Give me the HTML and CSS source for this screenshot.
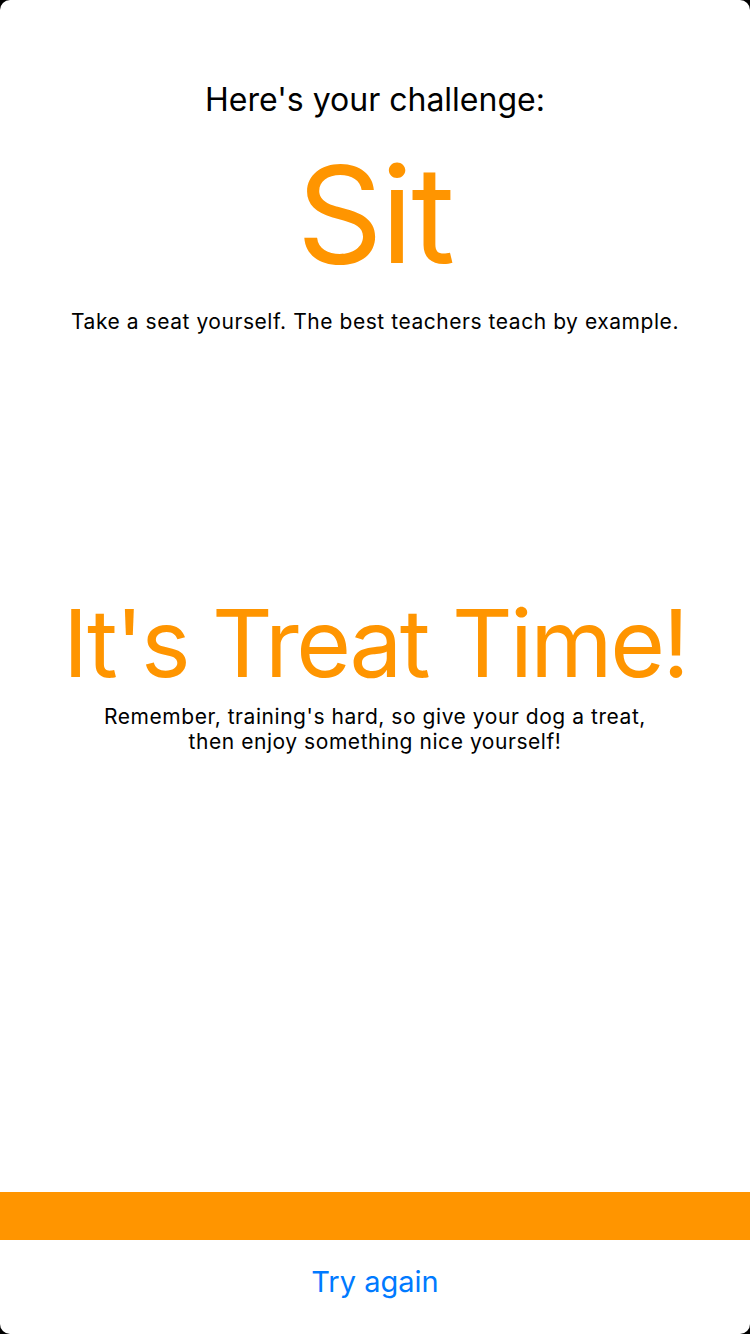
FILE: index.html
```html
<!DOCTYPE html>
<html>
<head>
<meta charset="utf-8">
<link rel="stylesheet" href="styles.css">
</head>
<body>
<div class="screen">
  <main class="content">
    <section class="challenge">
      <h2 class="intro">Here's your challenge:</h2>
      <h1 class="command">Sit</h1>
      <p class="hint">Take a seat yourself. The best teachers teach by example.</p>
    </section>
    <section class="reward">
      <h1 class="treat">It's Treat Time!</h1>
      <p class="note">Remember, training's hard, so give your dog a treat,<br>then enjoy something nice yourself!</p>
    </section>
  </main>
  <div class="bar"></div>
  <footer class="footer">
    <button class="retry">Try again</button>
  </footer>
</div>
</body>
</html>
```
FILE: styles.css
```css
html, body {
  margin: 0;
  padding: 0;
  background: #000;
}
.screen {
  width: 750px;
  height: 1334px;
  background: #fff;
  border-radius: 10px;
  overflow: hidden;
  display: flex;
  flex-direction: column;
  font-family: Inter, Roboto, "Liberation Sans", sans-serif;
  color: #000;
}
.content {
  flex: 1;
  display: flex;
  flex-direction: column;
  align-items: center;
}
.challenge {
  display: flex;
  flex-direction: column;
  align-items: center;
  padding-top: 80px;
}
.intro {
  margin: 0;
  font-size: 32px;
  font-weight: 400;
  line-height: 40px;
}
.command {
  margin: 0;
  font-size: 134px;
  font-weight: 400;
  line-height: 188px;
  color: #ff9500;
  letter-spacing: -2px;
}
.hint {
  margin: 0;
  font-size: 21px;
  line-height: 28px;
  letter-spacing: 0.55px;
}
.reward {
  display: flex;
  flex-direction: column;
  align-items: center;
  margin-top: 252px;
}
.treat {
  margin: 0;
  font-size: 94px;
  font-weight: 400;
  line-height: 110px;
  color: #ff9500;
  letter-spacing: -2.5px;
}
.note {
  margin: 6px 0 0;
  font-size: 21px;
  line-height: 25px;
  letter-spacing: 0.55px;
  text-align: center;
}
.bar {
  height: 48px;
  background: #ff9500;
}
.footer {
  height: 94px;
  box-sizing: border-box;
  padding-bottom: 12px;
  display: flex;
  align-items: center;
  justify-content: center;
}
.retry {
  border: 0;
  background: none;
  padding: 0;
  font-family: inherit;
  font-size: 29px;
  color: #007aff;
  cursor: pointer;
}
```
